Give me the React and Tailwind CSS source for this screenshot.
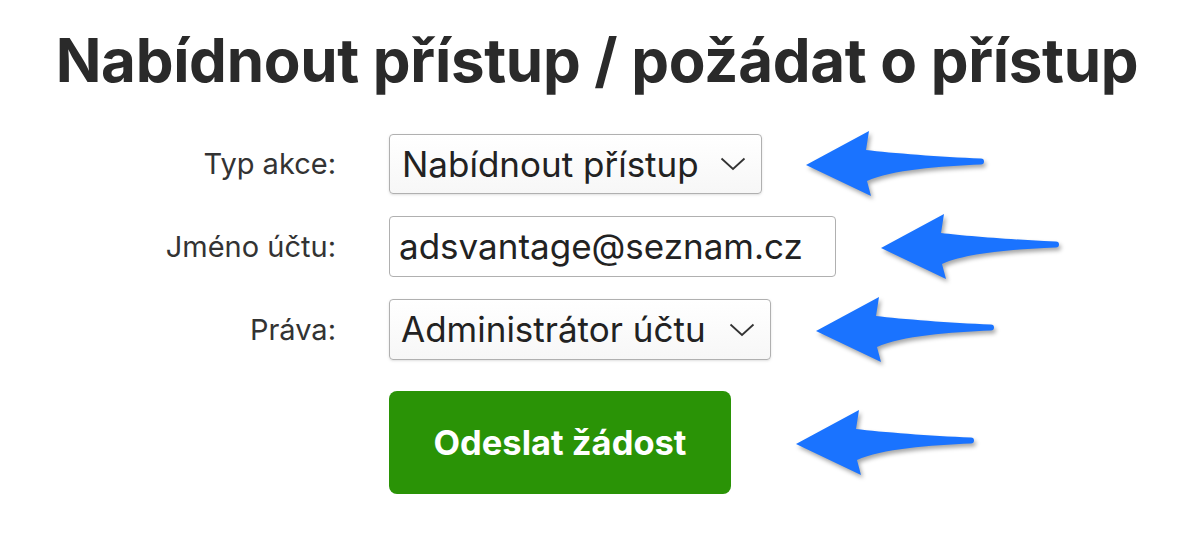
import React from 'react';

function Arrow() {
  return (
    <svg width="200" height="80" viewBox="0 0 200 80" className="shrink-0 drop-shadow-[2px_3px_2px_rgba(0,0,0,0.35)]">
      <path
        d="M15 41 L78 7 L75 26 C100 29 150 33 190 34.5 A3 3 0 0 1 190 40.5 C150 42 100 46 76 57 L80 72 Z"
        fill="#1a73ff"
      />
    </svg>
  );
}

function Chevron() {
  return (
    <svg width="26" height="14" viewBox="0 0 26 14" className="shrink-0">
      <path d="M1.5 1.5 L13 12 L24.5 1.5" fill="none" stroke="#333" strokeWidth="1.8" />
    </svg>
  );
}

function Row({ label, children, arrowGap }) {
  return (
    <div className="flex items-center">
      <div className="w-[336px] text-right text-[29px] text-[#333]">{label}</div>
      <div className="ml-[53px] flex items-center">
        {children}
        <div className={`-my-[20px] ${arrowGap}`}>
          <Arrow />
        </div>
      </div>
    </div>
  );
}

export default function App() {
  const font = { fontFamily: 'Inter, "Noto Sans", sans-serif' };
  return (
    <div className="min-h-screen bg-white" style={font}>
      <h1 className="pt-[24px] text-center text-[60px] font-bold leading-[72px] tracking-[-0.3px] text-[#2a2a2a]">
        Nabídnout přístup / požádat o přístup
      </h1>

      <div className="mt-[38px] flex flex-col">
        <Row label="Typ akce:" arrowGap="ml-[29px]">
          <div className="flex h-[60px] w-[373px] items-center justify-between rounded-[4px] border border-[#b0b0b0] bg-gradient-to-b from-white to-[#f7f7f7] pl-[12px] pr-[15px] text-[35px] text-[#222] shadow-sm">
            <span>Nabídnout přístup</span>
            <Chevron />
          </div>
        </Row>

        <div className="mt-[22px]">
          <Row label="Jméno účtu:" arrowGap="ml-[30px]">
            <div className="flex h-[61px] w-[447px] items-center rounded-[4px] border border-[#b0b0b0] bg-white pl-[9px] text-[35px] text-[#222]">
              adsvantage@seznam.cz
            </div>
          </Row>
        </div>

        <div className="mt-[22px]">
          <Row label="Práva:" arrowGap="ml-[30px]">
            <div className="flex h-[61px] w-[382px] items-center justify-between rounded-[4px] border border-[#b0b0b0] bg-gradient-to-b from-white to-[#f7f7f7] pl-[11px] pr-[15px] text-[35px] text-[#222] shadow-sm">
              <span>Administrátor účtu</span>
              <Chevron />
            </div>
          </Row>
        </div>

        <div className="mt-[31px]">
          <Row label="" arrowGap="ml-[50px]">
            <button className="flex h-[103px] w-[342px] items-center justify-center rounded-[8px] bg-[#2a9306] text-[34.5px] font-bold text-white">
              Odeslat žádost
            </button>
          </Row>
        </div>
      </div>
    </div>
  );
}
